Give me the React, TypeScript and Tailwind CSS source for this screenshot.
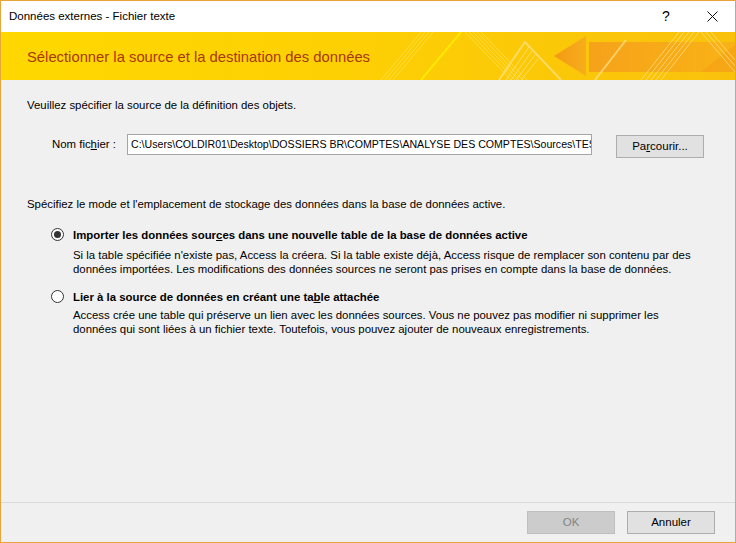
import React from "react";

const font = { fontFamily: '"Liberation Sans", Arial, sans-serif' };

function Banner() {
    return (
        <div className="relative h-[48px] overflow-hidden bg-gradient-to-r from-[#ffd800] via-[#fdcf04] to-[#f9c10c]">
            <svg className="absolute inset-0" width="734" height="48" viewBox="0 0 734 48">
                <defs>
                    <linearGradient id="shaft" x1="0" x2="1" y1="0" y2="0">
                        <stop offset="0" stopColor="#f6a21a" />
                        <stop offset="1" stopColor="#f9b316" />
                    </linearGradient>
                    <linearGradient id="head" x1="0" x2="1" y1="0" y2="0">
                        <stop offset="0" stopColor="#f39a12" />
                        <stop offset="1" stopColor="#f7ad1c" />
                    </linearGradient>
                </defs>
                {/* stripes left */}
                <g fill="none" stroke="#ffe96a" strokeOpacity="0.55" strokeWidth="1">
                    <path d="M380 48 L420 0" />
                    <path d="M384 48 L424 0" />
                    <path d="M388 48 L428 0" />
                    <path d="M392 48 L432 0" />
                    <path d="M420 48 L460 0" stroke="#ffef00" strokeWidth="2" strokeOpacity="0.8" />
                    <path d="M464 0 L510 48" />
                    <path d="M468 0 L514 48" />
                    <path d="M472 0 L518 48" />
                    <path d="M476 0 L522 48" />
                    <path d="M480 0 L526 48" />
                </g>
                {/* arrow */}
                <path d="M553 24 L585 4 L585 44 Z" fill="url(#head)" />
                <rect x="588" y="10" width="146" height="30" fill="url(#shaft)" />
                <path d="M735 12 L735 40 L700 40 Z" fill="#f59f15" opacity="0.6" />
                {/* peak stripes */}
                <g fill="none" stroke="#ffe38a" strokeOpacity="0.7" strokeWidth="1">
                    <path d="M498 48 L524 10 L560 48" strokeWidth="2" />
                    <path d="M505 48 L528 15" />
                    <path d="M510 48 L531 19" />
                    <path d="M515 48 L534 23" />
                    <path d="M520 48 L537 27" />
                    <path d="M594 48 L625 8" strokeWidth="2" />
                    <path d="M640 48 L678 0" />
                    <path d="M645 48 L683 0" />
                    <path d="M650 48 L688 0" />
                    <path d="M655 48 L693 0" />
                    <path d="M660 48 L698 0" />
                    <path d="M700 0 L734 40" />
                    <path d="M705 0 L734 34" />
                    <path d="M710 0 L734 28" />
                </g>
            </svg>
            <div className="relative pl-[26px] pt-[14px] text-[14.8px] text-[#a8380a]">
                Sélectionner la source et la destination des données
            </div>
        </div>
    );
}

function Radio({ checked }: { checked?: boolean }) {
    return (
        <span className="mt-[1px] flex h-[13px] w-[13px] shrink-0 items-center justify-center rounded-full border border-[#333] bg-white">
            {checked && <span className="h-[7px] w-[7px] rounded-full bg-[#333]" />}
        </span>
    );
}

function WinButton({ children, disabled }: { children: React.ReactNode; disabled?: boolean }) {
    return (
        <button
            className={
                disabled
                    ? "h-[23px] w-[88px] border border-[#bfbfbf] bg-[#cccccc] text-[11.5px] text-[#838383]"
                    : "h-[23px] w-[88px] border border-[#adadad] bg-[#e1e1e1] text-[11.5px] text-black"
            }
        >
            {children}
        </button>
    );
}

export default function App() {
    return (
        <div className="flex h-[543px] w-[736px] flex-col border border-[#e6a43a] bg-[#f0f0f0] text-[11.4px] text-black" style={font}>
            <div className="flex h-[31px] items-center justify-between bg-white pl-[8px]">
                <span className="text-[11.5px]">Données externes - Fichier texte</span>
                <div className="flex h-full items-center">
                    <span className="w-[46px] text-center text-[14px]">?</span>
                    <span className="flex w-[46px] justify-center">
                        <svg width="11" height="11" viewBox="0 0 11 11">
                            <path d="M0.5 0.5 L10.5 10.5 M10.5 0.5 L0.5 10.5" stroke="#111" strokeWidth="1" />
                        </svg>
                    </span>
                </div>
            </div>

            <Banner />

            <div className="flex flex-1 flex-col px-[26px] pt-[17px]">
                <div>Veuillez spécifier la source de la définition des objets.</div>

                <div className="mt-[17px] flex items-center">
                    <span className="w-[100px] pl-[25px] whitespace-nowrap">
                        Nom fic<span className="underline">h</span>ier :
                    </span>
                    <div className="h-[21px] w-[465px] overflow-hidden whitespace-nowrap border border-[#a5a5a5] bg-white pl-[3px] text-[10.6px] leading-[19px]">
                        C:\Users\COLDIR01\Desktop\DOSSIERS BR\COMPTES\ANALYSE DES COMPTES\Sources\TEST.txt
                    </div>
                    <div className="ml-[24px] mt-[4px]">
                        <WinButton>
                            Pa<span className="underline">r</span>courir...
                        </WinButton>
                    </div>
                </div>

                <div className="mt-[38px]">Spécifiez le mode et l'emplacement de stockage des données dans la base de données active.</div>

                <div className="mt-[14px] flex gap-[9px] pl-[24px]">
                    <Radio checked />
                    <div className="flex flex-col">
                        <div className="font-bold">
                            Importer les données sour<span className="underline">c</span>es dans une nouvelle table de la base de données active
                        </div>
                        <div className="mt-[4px] leading-[14px] whitespace-nowrap">
                            Si la table spécifiée n'existe pas, Access la créera. Si la table existe déjà, Access risque de remplacer son contenu par des
                            <br />
                            données importées. Les modifications des données sources ne seront pas prises en compte dans la base de données.
                        </div>
                    </div>
                </div>

                <div className="mt-[13px] flex gap-[9px] pl-[24px]">
                    <Radio />
                    <div className="flex flex-col">
                        <div className="font-bold">
                            Lier à la source de données en créant une ta<span className="underline">b</span>le attachée
                        </div>
                        <div className="mt-[2px] leading-[14px] whitespace-nowrap">
                            Access crée une table qui préserve un lien avec les données sources. Vous ne pouvez pas modifier ni supprimer les
                            <br />
                            données qui sont liées à un fichier texte. Toutefois, vous pouvez ajouter de nouveaux enregistrements.
                        </div>
                    </div>
                </div>
            </div>

            <div className="flex h-[40px] items-center justify-end gap-[12px] border-t border-[#dadada] pr-[20px]">
                <WinButton disabled>OK</WinButton>
                <WinButton>Annuler</WinButton>
            </div>
        </div>
    );
}
